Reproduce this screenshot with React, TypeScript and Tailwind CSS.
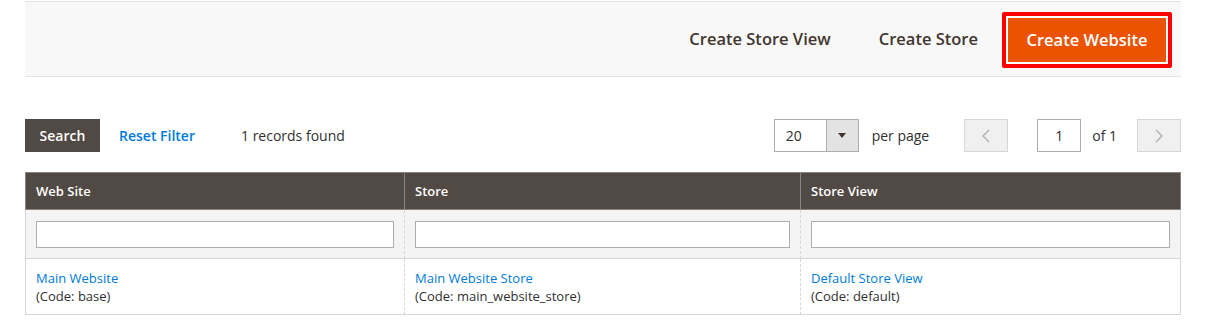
import React from "react";

const font = { fontFamily: '"Open Sans", "Liberation Sans", sans-serif' };

export default function App() {
  return (
    <div className="w-[1208px] h-[332px] bg-white text-[#303030] pt-px" style={font}>
      <div className="mx-[25px] w-[1156px]">
        {/* top action bar */}
        <div className="h-[76px] bg-[#f8f8f8] border-y border-[#e3e3e3] flex items-center justify-end pr-[9px]">
          <button className="h-[44px] px-6 text-[16.5px] font-semibold text-[#41362f]">Create Store View</button>
          <button className="h-[44px] px-6 text-[16.5px] font-semibold text-[#41362f]">Create Store</button>
          <div className="border-[4px] border-[#ff0000] rounded-[2px] p-[2px] bg-white mt-[2px]">
            <button className="w-[158px] h-[44px] bg-[#eb5202] text-white text-[16.5px] font-semibold">Create Website</button>
          </div>
        </div>

        {/* search row */}
        <div className="mt-[42px] h-[33px] flex items-center">
          <button className="h-[33px] w-[75px] bg-[#514943] text-white text-[14px] font-semibold">Search</button>
          <span className="ml-[19px] text-[14px] font-semibold text-[#007bdb]">Reset Filter</span>
          <span className="ml-[46px] text-[14px]">1 records found</span>
          <div className="ml-auto flex items-center">
            <div className="flex h-[33px] border border-[#adadad]">
              <div className="w-[51px] pl-[11px] flex items-center text-[14px]">20</div>
              <div className="w-[32px] bg-[#e3e3e3] border-l border-[#adadad] flex items-center justify-center">
                <svg width="8" height="5" viewBox="0 0 8 5"><path d="M0 0h8L4 5z" fill="#41362f" /></svg>
              </div>
            </div>
            <span className="ml-[13px] text-[14px]">per page</span>
            <div className="ml-[35px] w-[44px] h-[33px] bg-[#f0f0f0] border border-[#d6d6d6] flex items-center justify-center">
              <svg width="8" height="14" viewBox="0 0 8 14"><path d="M7 1L1 7l6 6" fill="none" stroke="#adadad" strokeWidth="1.3" /></svg>
            </div>
            <div className="ml-[29px] w-[44px] h-[33px] border border-[#adadad] flex items-center justify-center text-[14px]">1</div>
            <span className="ml-[11px] text-[14px]">of 1</span>
            <div className="ml-[20px] w-[44px] h-[33px] bg-[#f0f0f0] border border-[#d6d6d6] flex items-center justify-center">
              <svg width="8" height="14" viewBox="0 0 8 14"><path d="M1 1l6 6-6 6" fill="none" stroke="#adadad" strokeWidth="1.3" /></svg>
            </div>
          </div>
        </div>

        {/* table */}
        <div className="mt-[20px] grid grid-cols-[379px_396px_381px] text-[13px]">
          {["Web Site", "Store", "Store View"].map((h, i) => (
            <div
              key={h}
              className={`h-[38px] bg-[#514943] text-white font-semibold flex items-center pl-[10px] pt-[2px] border-y border-l border-[#8a837f] ${i === 2 ? "border-r" : ""}`}
            >
              {h}
            </div>
          ))}
          {[0, 1, 2].map((i) => (
            <div
              key={i}
              className={`h-[49px] bg-[#f4f4f4] px-[10px] pt-[11px] border-b border-[#d6d6d6] border-l border-l-[#d6d6d6] ${i === 2 ? "border-r border-r-[#d6d6d6]" : ""}`}
              style={i === 0 ? undefined : { borderLeftStyle: "dashed", borderBottomStyle: "solid", borderRightStyle: "solid" }}
            >
              <div className="h-[27px] bg-white border border-[#adadad]" />
            </div>
          ))}
          {[
            ["Main Website", "(Code: base)"],
            ["Main Website Store", "(Code: main_website_store)"],
            ["Default Store View", "(Code: default)"],
          ].map(([a, b], i) => (
            <div
              key={a}
              className={`h-[56px] px-[10px] pt-[10px] leading-[18px] border-b border-[#d6d6d6] border-l border-l-[#d6d6d6] ${i === 2 ? "border-r border-r-[#d6d6d6]" : ""}`}
              style={i === 0 ? undefined : { borderLeftStyle: "dashed", borderBottomStyle: "solid", borderRightStyle: "solid" }}
            >
              <div className="text-[#007bdb]">{a}</div>
              <div>{b}</div>
            </div>
          ))}
        </div>
      </div>
    </div>
  );
}
